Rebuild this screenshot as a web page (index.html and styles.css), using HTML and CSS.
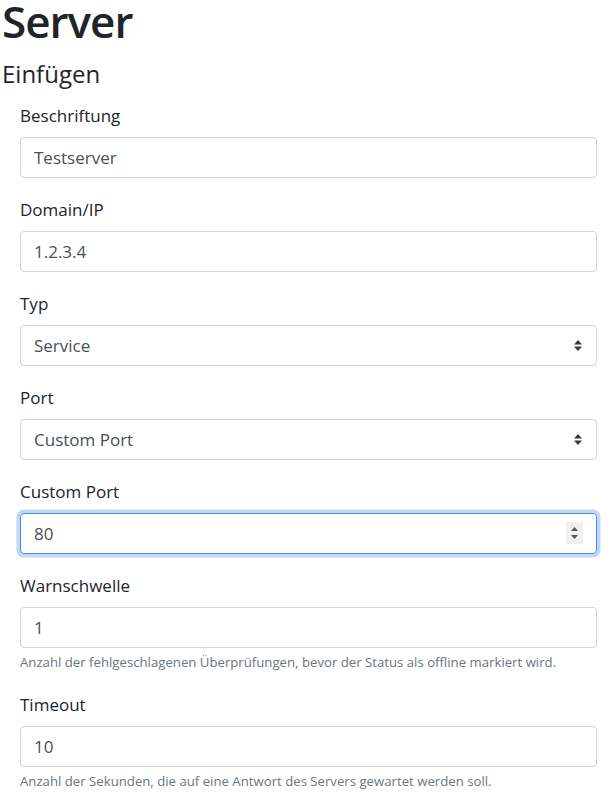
FILE: index.html
```html
<!DOCTYPE html>
<html lang="de">

<head>
    <meta charset="UTF-8">
    <meta name="viewport" content="width=device-width, initial-scale=1.0">
    <title>Server</title>
    <link rel="stylesheet" href="styles.css">
</head>

<body>
    <!-- Titel -->
    <div class="page">
        <h1 class="title">Server</h1>
        <h2 class="subtitle">Einfügen</h2>

        <!-- Formular -->
        <form class="server_form">
            <div class="form_group">
                <label>Beschriftung</label>
                <div class="field">Testserver</div>
            </div>
            <div class="form_group">
                <label>Domain/IP</label>
                <div class="field">1.2.3.4</div>
            </div>
            <div class="form_group">
                <label>Typ</label>
                <div class="field">
                    <span>Service</span>
                    <svg class="select_icon" width="8" height="11" viewBox="0 0 8 11">
                        <path d="M4 0 L8 4.5 L0 4.5 Z M0 6.5 L8 6.5 L4 11 Z" fill="#343a40"/>
                    </svg>
                </div>
            </div>
            <div class="form_group">
                <label>Port</label>
                <div class="field">
                    <span>Custom Port</span>
                    <svg class="select_icon" width="8" height="11" viewBox="0 0 8 11">
                        <path d="M4 0 L8 4.5 L0 4.5 Z M0 6.5 L8 6.5 L4 11 Z" fill="#343a40"/>
                    </svg>
                </div>
            </div>
            <div class="form_group">
                <label>Custom Port</label>
                <div class="field focus">
                    <span>80</span>
                    <span class="spinner">
                        <svg width="17" height="22" viewBox="0 0 17 22">
                            <path d="M8.5 5 L12 9 L5 9 Z M5 13 L12 13 L8.5 17 Z" fill="#545454"/>
                        </svg>
                    </span>
                </div>
            </div>
            <div class="form_group">
                <label>Warnschwelle</label>
                <div class="field">1</div>
                <small class="help">Anzahl der fehlgeschlagenen Überprüfungen, bevor der Status als offline markiert wird.</small>
            </div>
            <div class="form_group">
                <label>Timeout</label>
                <div class="field">10</div>
                <small class="help">Anzahl der Sekunden, die auf eine Antwort des Servers gewartet werden soll.</small>
            </div>
        </form>
    </div>
</body>

</html>
```
FILE: styles.css
```css
* {
    padding: 0px;
    margin: 0px;
    box-sizing: border-box;
}

body {
    font-family: "Open Sans", "Noto Sans", sans-serif;
    color: #212529;
    background-color: #fff;
}

.page {
    padding: 0 14px 0 2px;
}

.title {
    font-size: 44px;
    font-weight: 600;
    line-height: 43px;
    letter-spacing: -1px;
}

.subtitle {
    font-size: 24px;
    font-weight: 400;
    line-height: 1.2;
    margin-top: 17px;
}

.server_form {
    margin-left: 18px;
    margin-top: 14px;
}

.form_group {
    display: flex;
    flex-direction: column;
    margin-bottom: 19px;
}

.form_group label {
    font-size: 17px;
    line-height: 26px;
    margin-bottom: 8px;
}

.field {
    height: 41px;
    border: 1px solid #ced4da;
    border-radius: 4px;
    padding: 0 13px;
    font-size: 17px;
    color: #495057;
    display: flex;
    align-items: center;
    justify-content: space-between;
}

.select_icon {
    margin-right: 1px;
}

.focus {
    border: 1.5px solid #3b8eff;
    box-shadow: 0 0 0 3.5px #c3d7ee;
}

.spinner {
    display: flex;
    background-color: #f0f0f0;
}

.help {
    font-size: 13.2px;
    color: #6c757d;
    margin-top: 4px;
    line-height: 21px;
}
```
